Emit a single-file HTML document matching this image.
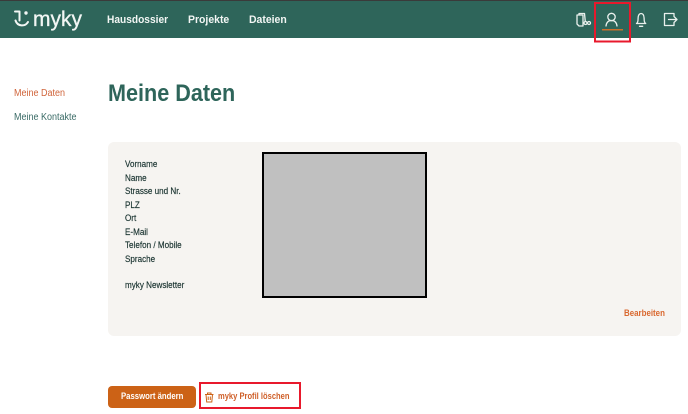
<!DOCTYPE html>
<html lang="de"><head><meta charset="utf-8"><title>Meine Daten</title>
<style>
html,body{margin:0;padding:0;background:#fff;width:688px;height:414px;overflow:hidden}
body{position:relative;font-family:"Liberation Sans",sans-serif}
.t{position:absolute;white-space:nowrap;line-height:1;transform-origin:0 50%}
.nav{color:#f2f6f4;font-weight:bold;font-size:11px;top:14.500px;transform:scaleX(.95)}
.l{left:125px;color:#16302d;font-size:8.800px;transform:scaleX(.92);-webkit-text-stroke:.15px #16302d}
</style></head><body>
<div style="position:absolute;left:0;top:0;width:688px;height:38px;background:#2e655a;border-top:1px solid #3a3a3a;box-sizing:border-box"></div>
<svg style="position:absolute;left:0;top:0" width="688" height="44" fill="none">
<g stroke="#f2f6f4" stroke-linecap="round" stroke-linejoin="round">
<path d="M15 11.500h4.500v9" stroke-width="2"/><circle cx="26" cy="13" r="1.700" fill="#f2f6f4" stroke="none"/>
<path d="M15.500 20.500c2 6 9.500 6.500 12.500 1.500" stroke-width="2"/>
<g stroke-width="1.300" stroke="#e9f0ed">
<path d="M577 15h6v11h-4l-2-2zM579 15v-1.500h5.500l.8 8"/>
<circle cx="585.500" cy="23" r="1.500"/><circle cx="589" cy="23" r="1.500"/></g>
<g stroke-width="1.300" stroke="#e9f0ed"><circle cx="611.500" cy="17" r="3.700"/><path d="M606 26c.5-4 2.800-5.500 5.500-5.500s5 1.500 5.500 5.500"/>
<path d="M636.500 23.500c1.800-1 1.500-3.500 1.600-5.500.2-3 1.500-4.500 3-4.500s2.800 1.500 3 4.500c.1 2-.2 4.500 1.600 5.500zM639.500 26.300h3.200"/>
<path d="M674 16.500v-3h-9.500v12h9.500v-3M668.500 19.500h8M674 16.500l3 3-3 3"/></g>
</g>
<rect x="602" y="29" width="21" height="1.500" fill="#cc6f2a"/>
<rect x="595" y="3" width="35" height="38.500" stroke="#e8192c" stroke-width="2"/>
</svg>
<div class="t" style="left:33px;top:9px;font-size:21px;color:#f2f6f4;-webkit-text-stroke:.3px #f2f6f4">myky</div>
<div class="t nav" style="left:107px;transform:scaleX(.925)">Hausdossier</div>
<div class="t nav" style="left:188px">Projekte</div>
<div class="t nav" style="left:249px">Dateien</div>

<div class="t" style="left:14px;top:89px;font-size:10px;color:#d0643a;transform:scaleX(.9)">Meine Daten</div>
<div class="t" style="left:14px;top:112.500px;font-size:10px;color:#3a6b66;transform:scaleX(.9)">Meine Kontakte</div>
<div class="t" style="left:108px;top:82px;font-size:24px;font-weight:bold;color:#2e655a;transform:scaleX(.9)">Meine Daten</div>

<div style="position:absolute;left:108px;top:142px;width:573px;height:194px;background:#f6f4f1;border-radius:6px"></div>
<div class="t l" style="top:160px">Vorname</div>
<div class="t l" style="top:174px">Name</div>
<div class="t l" style="top:187px">Strasse und Nr.</div>
<div class="t l" style="top:201px">PLZ</div>
<div class="t l" style="top:214px">Ort</div>
<div class="t l" style="top:228px">E-Mail</div>
<div class="t l" style="top:241px">Telefon / Mobile</div>
<div class="t l" style="top:255px">Sprache</div>
<div class="t l" style="top:281px">myky Newsletter</div>
<div style="position:absolute;left:262px;top:152px;width:165px;height:146px;box-sizing:border-box;background:#c0c0c0;border:2px solid #000"></div>
<div class="t" style="left:624px;top:309px;font-size:8.800px;font-weight:bold;color:#d9682f;transform:scaleX(.9)">Bearbeiten</div>

<div style="position:absolute;left:108px;top:386px;width:88px;height:22px;background:#cc6216;border-radius:4px"></div>
<div class="t" style="left:121px;top:392px;font-size:8.800px;font-weight:bold;color:#fff;transform:scaleX(.88)">Passwort ändern</div>
<div style="position:absolute;left:199px;top:382px;width:102px;height:27px;box-sizing:border-box;border:2px solid #e8192c"></div>
<svg style="position:absolute;left:204px;top:392px" width="11" height="11" fill="none" stroke="#cc6216" stroke-width="1">
<path d="M1 2.500h8.500M3.500 2.500v-1.500h3.500v1.500M2 2.500l.7 7.500h5.100l.7-7.500M4.200 4.500v3.500M6.300 4.500v3.500"/></svg>
<div class="t" style="left:218px;top:392px;font-size:8.800px;font-weight:bold;color:#cf5f28;transform:scaleX(.86)">myky Profil löschen</div>
</body></html>
